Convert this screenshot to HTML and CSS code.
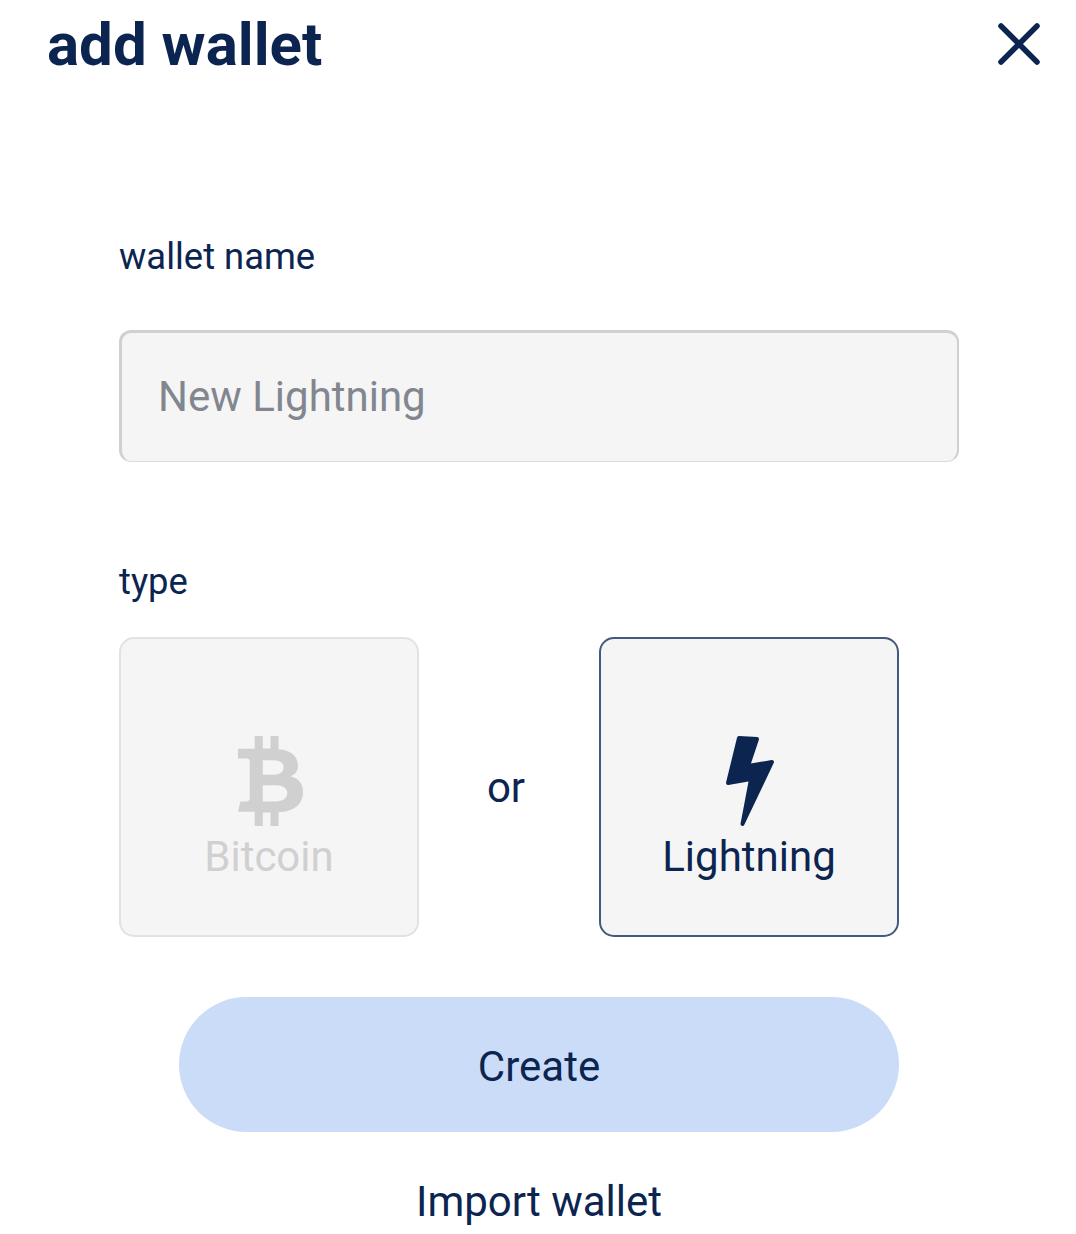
FILE: index.html
```html
<!DOCTYPE html>
<html lang="en">
<head>
    <meta charset="UTF-8">
    <meta name="viewport" content="width=device-width, initial-scale=1.0">
    <title>add wallet</title>
    <link rel="stylesheet" href="styles.css">
</head>
<body>

    <div class="wallet-page">
        <div class="wallet-header">
            <h1>add wallet</h1>
            <button class="close-button" aria-label="Close">
                <svg width="42" height="42" viewBox="0 0 42 42">
                    <path d="M3 3 L39 39 M39 3 L3 39" stroke="#0c2550" stroke-width="5.5" stroke-linecap="round" fill="none"/>
                </svg>
            </button>
        </div>

        <form class="wallet-form">
            <label class="field-label name-label" for="wallet-name">wallet name</label>
            <input type="text" id="wallet-name" class="name-input" placeholder="New Lightning">

            <div class="field-label type-label">type</div>
            <div class="type-row">
                <button type="button" class="type-card type-card-off">
                    <svg class="type-icon" width="65" height="90" viewBox="143 50 194 268">
                        <path fill-rule="evenodd" fill="#d0d0d0" d="M193 50 H217 V87 H240 V50 H264 V89 C304 92 322 112 322 139 C322 153 314 164 300 170 C324 176 337 192 337 216 C337 254 310 275 264 277 V318 H240 V278 H217 V318 H193 V276 H143 L150 245 H168 Q178 245 178 235 V127 Q178 117 168 117 H143 V88 H193 Z M217 122 V165 H248 C268 165 279 157 279 143 C279 130 268 122 248 122 Z M217 197 V245 H255 C277 245 290 236 290 220 C290 206 277 197 255 197 Z"/>
                    </svg>
                    <span>Bitcoin</span>
                </button>
                <div class="or-text">or</div>
                <button type="button" class="type-card type-card-on">
                    <svg class="type-icon" width="50" height="90" viewBox="725 736 50 90">
                        <path fill="#0c2550" stroke="#0c2550" stroke-width="4" stroke-linejoin="round" d="M739 738 L757 739 L748 766 L772 762 L742.5 824 L751 779 L728 783 Z"/>
                    </svg>
                    <span>Lightning</span>
                </button>
            </div>

            <button type="button" class="create-button">Create</button>
            <button type="button" class="import-button">Import wallet</button>
        </form>
    </div>

</body>
</html>
```

FILE: styles.css
```css
body {
    font-family: Roboto, sans-serif;
    background-color: #fff;
    color: #0c2550;
    margin: 0;
    padding: 0;
}

button {
    font-family: Roboto, sans-serif;
    color: #0c2550;
    background: none;
    border: none;
    padding: 0;
}

.wallet-header {
    display: flex;
    justify-content: space-between;
    align-items: center;
    height: 88px;
    padding: 0 36px 0 47px;
}

.wallet-header h1 {
    font-size: 60px;
    font-weight: 700;
    margin: 0;
}

.close-button {
    display: flex;
    width: 42px;
    height: 42px;
}

.wallet-form {
    display: flex;
    flex-direction: column;
    padding: 0 117px 0 119px;
}

.field-label {
    font-size: 36.4px;
    line-height: 42px;
}

.name-label {
    margin-top: 148px;
}

.name-input {
    box-sizing: border-box;
    width: 840px;
    height: 132px;
    margin-top: 52px;
    padding: 0 36px 2px;
    font-family: Roboto, sans-serif;
    font-size: 42px;
    background-color: #f5f5f5;
    border-style: solid;
    border-color: #d0d0d0 #cfcfcf #dcdcdc #d0d0d0;
    border-width: 3px 2px 1px 3px;
    border-radius: 12px;
}

.name-input::placeholder {
    color: #82868f;
    opacity: 1;
}

.type-label {
    margin-top: 99px;
}

.type-row {
    display: flex;
    align-items: center;
    margin-top: 34px;
}

.type-card {
    box-sizing: border-box;
    display: flex;
    flex-direction: column;
    align-items: center;
    width: 300px;
    height: 300px;
    padding-top: 97px;
    font-size: 42px;
    line-height: 49px;
    background-color: #f5f5f5;
    border-radius: 15px;
}

.type-icon {
    margin-left: 2px;
}

.type-card span {
    margin-top: 6px;
}

.type-card-off {
    color: #d0d0d0;
    border: 2px solid #e2e2e2;
}

.type-card-on {
    border: 2px solid #44597f;
}

.or-text {
    width: 180px;
    padding-right: 6px;
    box-sizing: border-box;
    font-size: 42px;
    text-align: center;
}

.create-button {
    width: 720px;
    height: 135px;
    margin: 60px 0 0 60px;
    padding-top: 4px;
    font-size: 42px;
    background-color: #cbdcf8;
    border-radius: 68px;
}

.import-button {
    width: 840px;
    margin-top: 45px;
    font-size: 42px;
    line-height: 49px;
}
```
